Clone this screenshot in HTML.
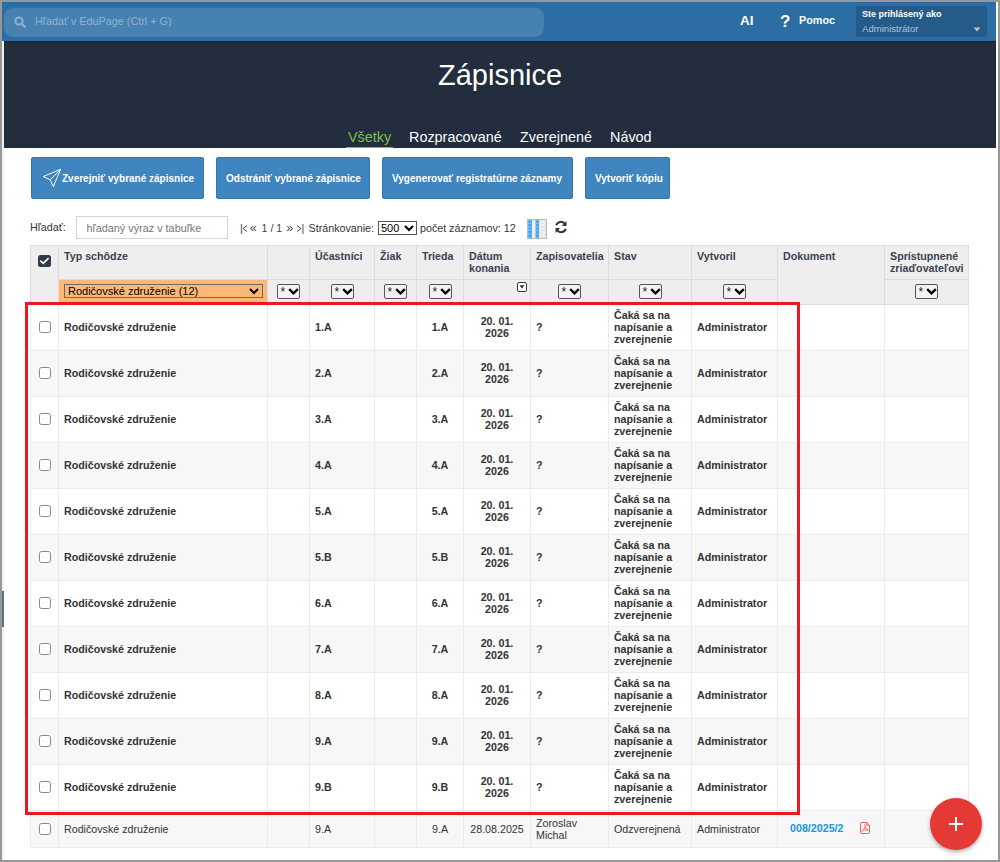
<!DOCTYPE html><html><head><meta charset="utf-8"><style>

*{box-sizing:border-box;margin:0;padding:0}
html,body{width:1000px;height:862px;overflow:hidden;background:#989898;font-family:"Liberation Sans", sans-serif;color:#333}
.abs{position:absolute}
.t{position:absolute;white-space:nowrap;line-height:1}
.b{font-weight:bold}
.btn{position:absolute;top:157px;height:42px;background:#3f85c0;border:1px solid #3677ae;border-radius:2px;color:#fff;font-weight:bold;font-size:10px}
.fs{position:absolute;width:23px;height:15px;border:1px solid #555;border-radius:2px;background:#f2f2f2}
.vl{position:absolute;width:1px}
.hl{position:absolute;height:1px}
.cb{position:absolute;width:12px;height:12px;border:1.5px solid #8a8a8a;border-radius:2.5px;background:#fff}

</style></head><body>
<div class="abs" style="left:2px;top:2px;width:996px;height:858px;background:#fff"></div>
<div class="abs" style="left:2px;top:41px;width:2px;height:818px;background:#f0f0f0"></div>
<div class="abs" style="left:2px;top:591px;width:2px;height:36px;background:#5a7486"></div>
<div class="abs" style="left:2px;top:2px;width:994px;height:39px;background:#2c6ea3"></div>
<div class="abs" style="left:4px;top:7px;width:540px;height:30px;background:#4681b2;border-radius:9px;box-shadow:inset 0 1px 1px rgba(0,0,0,0.12)"></div>
<svg class="abs" style="left:14px;top:16px" width="12" height="12" viewBox="0 0 12 12"><circle cx="5" cy="5" r="3.6" fill="none" stroke="#8fb3d2" stroke-width="2"/><line x1="7.6" y1="7.6" x2="10.8" y2="10.8" stroke="#8fb3d2" stroke-width="2.2" stroke-linecap="round"/></svg>
<div class="t" style="left:35px;top:16px;font-size:10.8px;color:#8fb3d2">Hľadať v EduPage (Ctrl + G)</div>
<div class="t b" style="left:740px;top:14px;font-size:13.5px;color:#fff">AI</div>
<div class="t b" style="left:780px;top:13px;font-size:17px;color:#fff">?</div>
<div class="t b" style="left:799px;top:15px;font-size:10.8px;color:#fff">Pomoc</div>
<div class="abs" style="left:856px;top:6px;width:131px;height:31px;background:#245b89;border-radius:3px"></div>
<div class="t b" style="left:862px;top:10px;font-size:9px;color:#fff">Ste prihlásený ako</div>
<div class="t" style="left:862px;top:24px;font-size:9.6px;color:#a6c3de">Administrátor</div>
<svg class="abs" style="left:973px;top:27px" width="8" height="5" viewBox="0 0 8 5"><path d="M0.5 0.5 L7.5 0.5 L4 4.5 Z" fill="#c9c3b8"/></svg>
<div class="abs" style="left:4px;top:41px;width:992px;height:107px;background:#222d3d;box-shadow:inset 0 1px 1px rgba(0,0,0,0.3)"></div>
<div class="t" style="left:438px;top:61px;font-size:29px;color:#fff">Zápisnice</div>
<div class="t" style="left:348px;top:130px;font-size:14.4px;color:#7cc144">Všetky</div>
<div class="abs" style="left:346px;top:147px;width:47px;height:1px;background:#7cc144"></div>
<div class="t" style="left:409px;top:130px;font-size:14.4px;color:#fff">Rozpracované</div>
<div class="t" style="left:520px;top:130px;font-size:14.4px;color:#fff">Zverejnené</div>
<div class="t" style="left:610px;top:130px;font-size:14.4px;color:#fff">Návod</div>
<div class="btn" style="left:31px;width:173px"><div class="t" style="left:30px;top:16px">Zverejniť vybrané zápisnice</div></div>
<svg class="abs" style="left:42px;top:168px" width="20" height="20" viewBox="0 0 20 20"><path d="M1.2 8.6 L18.6 1.3 L11.3 18.6 L8.2 11.8 Z M8.2 11.8 L18.6 1.3" fill="none" stroke="#fff" stroke-width="1" stroke-linejoin="round"/></svg>
<div class="btn" style="left:216px;width:154px"><div class="t" style="left:9px;top:16px">Odstrániť vybrané zápisnice</div></div>
<div class="btn" style="left:382px;width:191px"><div class="t" style="left:9px;top:16px">Vygenerovať registratúrne záznamy</div></div>
<div class="btn" style="left:585px;width:85px"><div class="t" style="left:9px;top:16px">Vytvoriť kópiu</div></div>
<div class="t" style="left:30px;top:222px;font-size:10.7px;color:#333">Hľadať:</div>
<div class="abs" style="left:76px;top:216px;width:152px;height:23px;border:1px solid #d4d4d4;background:#fff"></div>
<div class="t" style="left:86.5px;top:223px;font-size:10.85px;color:#767676">hľadaný výraz v tabuľke</div>
<div class="t" style="left:240px;top:223px;font-size:10.7px;color:#444">|</div>
<div class="t" style="left:249.8px;top:221.5px;font-size:12.5px;color:#444">«</div>
<div class="t" style="left:261.5px;top:223px;font-size:10.7px;color:#444">1 / 1</div>
<div class="t" style="left:286.3px;top:221.5px;font-size:12.5px;color:#444">»</div>
<div class="t" style="left:301.5px;top:223px;font-size:10.7px;color:#444">|</div>
<svg class="abs" style="left:242px;top:225px" width="6" height="7" viewBox="0 0 6 7"><path d="M5 0.5 L1 3.5 L5 6.5" fill="none" stroke="#444" stroke-width="1"/></svg>
<svg class="abs" style="left:296px;top:225px" width="6" height="7" viewBox="0 0 6 7"><path d="M1 0.5 L5 3.5 L1 6.5" fill="none" stroke="#444" stroke-width="1"/></svg>
<div class="t" style="left:308.6px;top:223px;font-size:10.7px;color:#333">Stránkovanie:</div>
<div class="abs" style="left:378px;top:221px;width:39px;height:14px;border:1px solid #555;background:#fff"></div>
<div class="t" style="left:381px;top:223px;font-size:11px;color:#000">500</div>
<svg class="abs" style="left:404px;top:225px" width="10" height="7" viewBox="0 0 10 7"><path d="M1 1 L5 5 L9 1" fill="none" stroke="#000" stroke-width="2"/></svg>
<div class="t" style="left:420px;top:223px;font-size:10.7px;color:#333">počet záznamov: 12</div>
<svg class="abs" style="left:527px;top:219px" width="20" height="20" viewBox="0 0 20 20"><rect x="0" y="0" width="20" height="20" fill="#b3bfc8"/><rect x="1.2" y="1.2" width="17.6" height="17.6" fill="#f1f1f1"/><rect x="1.2" y="1.2" width="3.8" height="17.6" fill="#4aa3f5"/><rect x="8.5" y="1.2" width="3.6" height="17.6" fill="#4aa3f5"/><path d="M5 4.5H8.5M12.1 4.5H18.8M5 8H8.5M12.1 8H18.8M5 11.2H8.5M12.1 11.2H18.8M5 15H8.5M12.1 15H18.8M15.3 1.2V18.8" stroke="#dfe4e8" stroke-width="0.8"/><path d="M1.2 4.5H5M8.5 4.5H12.1M1.2 8H5M8.5 8H12.1M1.2 11.2H5M8.5 11.2H12.1M1.2 15H5M8.5 15H12.1" stroke="#8cc4f7" stroke-width="0.8"/></svg>
<svg class="abs" style="left:554px;top:220px" width="14" height="14" viewBox="0 0 14 14"><path d="M2.2 5.2 A5 5 0 0 1 11 4" fill="none" stroke="#2b3340" stroke-width="2"/><path d="M12.5 1 L12.5 6 L7.8 6 Z" fill="#2b3340"/><path d="M11.8 8.8 A5 5 0 0 1 3 10" fill="none" stroke="#2b3340" stroke-width="2"/><path d="M1.5 13 L1.5 8 L6.2 8 Z" fill="#2b3340"/></svg>
<div class="abs" style="left:30px;top:245px;width:939px;height:60px;background:#eeeeee"></div>
<div class="abs" style="left:30px;top:304px;width:939px;height:47px;background:#ffffff"></div>
<div class="abs" style="left:30px;top:350px;width:939px;height:47px;background:#f7f7f7"></div>
<div class="abs" style="left:30px;top:396px;width:939px;height:47px;background:#ffffff"></div>
<div class="abs" style="left:30px;top:442px;width:939px;height:47px;background:#f7f7f7"></div>
<div class="abs" style="left:30px;top:488px;width:939px;height:47px;background:#ffffff"></div>
<div class="abs" style="left:30px;top:534px;width:939px;height:47px;background:#f7f7f7"></div>
<div class="abs" style="left:30px;top:580px;width:939px;height:47px;background:#ffffff"></div>
<div class="abs" style="left:30px;top:626px;width:939px;height:47px;background:#f7f7f7"></div>
<div class="abs" style="left:30px;top:672px;width:939px;height:47px;background:#ffffff"></div>
<div class="abs" style="left:30px;top:718px;width:939px;height:47px;background:#f7f7f7"></div>
<div class="abs" style="left:30px;top:764px;width:939px;height:47px;background:#ffffff"></div>
<div class="abs" style="left:30px;top:810px;width:939px;height:38px;background:#f7f7f7"></div>
<div class="abs" style="left:59px;top:280px;width:208px;height:24px;background:#fdb877"></div>
<div class="hl" style="left:30px;top:350px;width:939px;background:#ebebeb"></div>
<div class="hl" style="left:30px;top:396px;width:939px;background:#ebebeb"></div>
<div class="hl" style="left:30px;top:442px;width:939px;background:#ebebeb"></div>
<div class="hl" style="left:30px;top:488px;width:939px;background:#ebebeb"></div>
<div class="hl" style="left:30px;top:534px;width:939px;background:#ebebeb"></div>
<div class="hl" style="left:30px;top:580px;width:939px;background:#ebebeb"></div>
<div class="hl" style="left:30px;top:626px;width:939px;background:#ebebeb"></div>
<div class="hl" style="left:30px;top:672px;width:939px;background:#ebebeb"></div>
<div class="hl" style="left:30px;top:718px;width:939px;background:#ebebeb"></div>
<div class="hl" style="left:30px;top:764px;width:939px;background:#ebebeb"></div>
<div class="hl" style="left:30px;top:810px;width:939px;background:#ebebeb"></div>
<div class="hl" style="left:30px;top:847px;width:939px;background:#ebebeb"></div>
<div class="vl" style="left:30px;top:304px;height:544px;background:#ebebeb"></div>
<div class="vl" style="left:58px;top:304px;height:544px;background:#ebebeb"></div>
<div class="vl" style="left:267px;top:304px;height:544px;background:#ebebeb"></div>
<div class="vl" style="left:309px;top:304px;height:544px;background:#ebebeb"></div>
<div class="vl" style="left:374px;top:304px;height:544px;background:#ebebeb"></div>
<div class="vl" style="left:416px;top:304px;height:544px;background:#ebebeb"></div>
<div class="vl" style="left:463px;top:304px;height:544px;background:#ebebeb"></div>
<div class="vl" style="left:530px;top:304px;height:544px;background:#ebebeb"></div>
<div class="vl" style="left:608px;top:304px;height:544px;background:#ebebeb"></div>
<div class="vl" style="left:691px;top:304px;height:544px;background:#ebebeb"></div>
<div class="vl" style="left:777px;top:304px;height:544px;background:#ebebeb"></div>
<div class="vl" style="left:884px;top:304px;height:544px;background:#ebebeb"></div>
<div class="vl" style="left:968px;top:304px;height:544px;background:#ebebeb"></div>
<div class="hl" style="left:30px;top:245px;width:939px;background:#dcdcdc"></div>
<div class="hl" style="left:30px;top:304px;width:939px;background:#dcdcdc"></div>
<div class="hl" style="left:58px;top:279px;width:719px;background:#dcdcdc"></div>
<div class="hl" style="left:884px;top:279px;width:84px;background:#dcdcdc"></div>
<div class="vl" style="left:30px;top:245px;height:59px;background:#dcdcdc"></div>
<div class="vl" style="left:58px;top:245px;height:59px;background:#dcdcdc"></div>
<div class="vl" style="left:267px;top:245px;height:59px;background:#dcdcdc"></div>
<div class="vl" style="left:309px;top:245px;height:59px;background:#dcdcdc"></div>
<div class="vl" style="left:374px;top:245px;height:59px;background:#dcdcdc"></div>
<div class="vl" style="left:416px;top:245px;height:59px;background:#dcdcdc"></div>
<div class="vl" style="left:463px;top:245px;height:59px;background:#dcdcdc"></div>
<div class="vl" style="left:530px;top:245px;height:59px;background:#dcdcdc"></div>
<div class="vl" style="left:608px;top:245px;height:59px;background:#dcdcdc"></div>
<div class="vl" style="left:691px;top:245px;height:59px;background:#dcdcdc"></div>
<div class="vl" style="left:777px;top:245px;height:59px;background:#dcdcdc"></div>
<div class="vl" style="left:884px;top:245px;height:59px;background:#dcdcdc"></div>
<div class="vl" style="left:968px;top:245px;height:59px;background:#dcdcdc"></div>
<div class="t b" style="left:64px;top:251px;font-size:10.7px;color:#3b4250">Typ schôdze</div>
<div class="t b" style="left:315px;top:251px;font-size:10.7px;color:#3b4250">Účastníci</div>
<div class="t b" style="left:380px;top:251px;font-size:10.7px;color:#3b4250">Žiak</div>
<div class="t b" style="left:422px;top:251px;font-size:10.7px;color:#3b4250">Trieda</div>
<div class="t b" style="left:469px;top:251px;font-size:10.7px;color:#3b4250">Dátum</div>
<div class="t b" style="left:469px;top:263px;font-size:10.7px;color:#3b4250">konania</div>
<div class="t b" style="left:536px;top:251px;font-size:10.7px;color:#3b4250">Zapisovatelia</div>
<div class="t b" style="left:614px;top:251px;font-size:10.7px;color:#3b4250">Stav</div>
<div class="t b" style="left:697px;top:251px;font-size:10.7px;color:#3b4250">Vytvoril</div>
<div class="t b" style="left:783px;top:251px;font-size:10.7px;color:#3b4250">Dokument</div>
<div class="t b" style="left:890px;top:251px;font-size:10.7px;color:#3b4250">Sprístupnené</div>
<div class="t b" style="left:890px;top:263px;font-size:10.7px;color:#3b4250">zriaďovateľovi</div>
<div class="abs" style="left:38px;top:255px;width:13px;height:12px;background:#343a44;border-radius:2.5px"></div>
<svg class="abs" style="left:38px;top:255px" width="13" height="12" viewBox="0 0 13 12"><path d="M2.3 5.6 L5.2 8.3 L10.6 3.2" fill="none" stroke="#fff" stroke-width="1.6"/></svg>
<div class="fs" style="left:277px;top:284px"></div>
<div class="t" style="left:280.5px;top:286px;font-size:12px;color:#222">*</div>
<svg class="abs" style="left:288px;top:288px" width="11" height="7" viewBox="0 0 11 7"><path d="M1.2 1.2 L5.5 5.3 L9.8 1.2" fill="none" stroke="#000" stroke-width="2.3"/></svg>
<div class="fs" style="left:331px;top:284px"></div>
<div class="t" style="left:334.5px;top:286px;font-size:12px;color:#222">*</div>
<svg class="abs" style="left:342px;top:288px" width="11" height="7" viewBox="0 0 11 7"><path d="M1.2 1.2 L5.5 5.3 L9.8 1.2" fill="none" stroke="#000" stroke-width="2.3"/></svg>
<div class="fs" style="left:384px;top:284px"></div>
<div class="t" style="left:387.5px;top:286px;font-size:12px;color:#222">*</div>
<svg class="abs" style="left:395px;top:288px" width="11" height="7" viewBox="0 0 11 7"><path d="M1.2 1.2 L5.5 5.3 L9.8 1.2" fill="none" stroke="#000" stroke-width="2.3"/></svg>
<div class="fs" style="left:429px;top:284px"></div>
<div class="t" style="left:432.5px;top:286px;font-size:12px;color:#222">*</div>
<svg class="abs" style="left:440px;top:288px" width="11" height="7" viewBox="0 0 11 7"><path d="M1.2 1.2 L5.5 5.3 L9.8 1.2" fill="none" stroke="#000" stroke-width="2.3"/></svg>
<div class="fs" style="left:558px;top:284px"></div>
<div class="t" style="left:561.5px;top:286px;font-size:12px;color:#222">*</div>
<svg class="abs" style="left:569px;top:288px" width="11" height="7" viewBox="0 0 11 7"><path d="M1.2 1.2 L5.5 5.3 L9.8 1.2" fill="none" stroke="#000" stroke-width="2.3"/></svg>
<div class="fs" style="left:639px;top:284px"></div>
<div class="t" style="left:642.5px;top:286px;font-size:12px;color:#222">*</div>
<svg class="abs" style="left:650px;top:288px" width="11" height="7" viewBox="0 0 11 7"><path d="M1.2 1.2 L5.5 5.3 L9.8 1.2" fill="none" stroke="#000" stroke-width="2.3"/></svg>
<div class="fs" style="left:723px;top:284px"></div>
<div class="t" style="left:726.5px;top:286px;font-size:12px;color:#222">*</div>
<svg class="abs" style="left:734px;top:288px" width="11" height="7" viewBox="0 0 11 7"><path d="M1.2 1.2 L5.5 5.3 L9.8 1.2" fill="none" stroke="#000" stroke-width="2.3"/></svg>
<div class="fs" style="left:915px;top:284px"></div>
<div class="t" style="left:918.5px;top:286px;font-size:12px;color:#222">*</div>
<svg class="abs" style="left:926px;top:288px" width="11" height="7" viewBox="0 0 11 7"><path d="M1.2 1.2 L5.5 5.3 L9.8 1.2" fill="none" stroke="#000" stroke-width="2.3"/></svg>
<div class="abs" style="left:517px;top:282px;width:10px;height:10px;border:1px solid #3a3a3a;border-radius:2px;background:#fff"></div>
<svg class="abs" style="left:517px;top:282px" width="10" height="10" viewBox="0 0 10 10"><path d="M2.6 3.2 L7.4 3.2 L5 6.8 Z" fill="#2a2f3a"/></svg>
<div class="abs" style="left:64px;top:284px;width:199px;height:14px;border:1px solid #6b6b6b"></div>
<div class="t" style="left:68px;top:286px;font-size:11px;color:#000">Rodičovské združenie (12)</div>
<svg class="abs" style="left:249px;top:288px" width="10" height="7" viewBox="0 0 10 7"><path d="M1 1 L5 5 L9 1" fill="none" stroke="#000" stroke-width="2"/></svg>
<div class="cb" style="left:39px;top:321px"></div>
<div class="t b" style="left:64px;top:322px;font-size:10.7px;color:#333">Rodičovské združenie</div>
<div class="t b" style="left:315px;top:322px;font-size:10.7px;color:#333">1.A</div>
<div class="t b" style="left:417px;top:322px;width:46px;text-align:center;font-size:10.7px;color:#333">1.A</div>
<div class="t b" style="left:464px;top:316px;width:66px;text-align:center;font-size:10.7px;color:#333">20. 01.</div>
<div class="t b" style="left:464px;top:328px;width:66px;text-align:center;font-size:10.7px;color:#333">2026</div>
<div class="t b" style="left:536px;top:322px;font-size:10.7px;color:#333">?</div>
<div class="t b" style="left:614px;top:310px;font-size:10.7px;color:#333">Čaká sa na</div>
<div class="t b" style="left:614px;top:322px;font-size:10.7px;color:#333">napísanie a</div>
<div class="t b" style="left:614px;top:334px;font-size:10.7px;color:#333">zverejnenie</div>
<div class="t b" style="left:697px;top:322px;font-size:10.7px;color:#333">Administrator</div>
<div class="cb" style="left:39px;top:367px"></div>
<div class="t b" style="left:64px;top:368px;font-size:10.7px;color:#333">Rodičovské združenie</div>
<div class="t b" style="left:315px;top:368px;font-size:10.7px;color:#333">2.A</div>
<div class="t b" style="left:417px;top:368px;width:46px;text-align:center;font-size:10.7px;color:#333">2.A</div>
<div class="t b" style="left:464px;top:362px;width:66px;text-align:center;font-size:10.7px;color:#333">20. 01.</div>
<div class="t b" style="left:464px;top:374px;width:66px;text-align:center;font-size:10.7px;color:#333">2026</div>
<div class="t b" style="left:536px;top:368px;font-size:10.7px;color:#333">?</div>
<div class="t b" style="left:614px;top:356px;font-size:10.7px;color:#333">Čaká sa na</div>
<div class="t b" style="left:614px;top:368px;font-size:10.7px;color:#333">napísanie a</div>
<div class="t b" style="left:614px;top:380px;font-size:10.7px;color:#333">zverejnenie</div>
<div class="t b" style="left:697px;top:368px;font-size:10.7px;color:#333">Administrator</div>
<div class="cb" style="left:39px;top:413px"></div>
<div class="t b" style="left:64px;top:414px;font-size:10.7px;color:#333">Rodičovské združenie</div>
<div class="t b" style="left:315px;top:414px;font-size:10.7px;color:#333">3.A</div>
<div class="t b" style="left:417px;top:414px;width:46px;text-align:center;font-size:10.7px;color:#333">3.A</div>
<div class="t b" style="left:464px;top:408px;width:66px;text-align:center;font-size:10.7px;color:#333">20. 01.</div>
<div class="t b" style="left:464px;top:420px;width:66px;text-align:center;font-size:10.7px;color:#333">2026</div>
<div class="t b" style="left:536px;top:414px;font-size:10.7px;color:#333">?</div>
<div class="t b" style="left:614px;top:402px;font-size:10.7px;color:#333">Čaká sa na</div>
<div class="t b" style="left:614px;top:414px;font-size:10.7px;color:#333">napísanie a</div>
<div class="t b" style="left:614px;top:426px;font-size:10.7px;color:#333">zverejnenie</div>
<div class="t b" style="left:697px;top:414px;font-size:10.7px;color:#333">Administrator</div>
<div class="cb" style="left:39px;top:459px"></div>
<div class="t b" style="left:64px;top:460px;font-size:10.7px;color:#333">Rodičovské združenie</div>
<div class="t b" style="left:315px;top:460px;font-size:10.7px;color:#333">4.A</div>
<div class="t b" style="left:417px;top:460px;width:46px;text-align:center;font-size:10.7px;color:#333">4.A</div>
<div class="t b" style="left:464px;top:454px;width:66px;text-align:center;font-size:10.7px;color:#333">20. 01.</div>
<div class="t b" style="left:464px;top:466px;width:66px;text-align:center;font-size:10.7px;color:#333">2026</div>
<div class="t b" style="left:536px;top:460px;font-size:10.7px;color:#333">?</div>
<div class="t b" style="left:614px;top:448px;font-size:10.7px;color:#333">Čaká sa na</div>
<div class="t b" style="left:614px;top:460px;font-size:10.7px;color:#333">napísanie a</div>
<div class="t b" style="left:614px;top:472px;font-size:10.7px;color:#333">zverejnenie</div>
<div class="t b" style="left:697px;top:460px;font-size:10.7px;color:#333">Administrator</div>
<div class="cb" style="left:39px;top:505px"></div>
<div class="t b" style="left:64px;top:506px;font-size:10.7px;color:#333">Rodičovské združenie</div>
<div class="t b" style="left:315px;top:506px;font-size:10.7px;color:#333">5.A</div>
<div class="t b" style="left:417px;top:506px;width:46px;text-align:center;font-size:10.7px;color:#333">5.A</div>
<div class="t b" style="left:464px;top:500px;width:66px;text-align:center;font-size:10.7px;color:#333">20. 01.</div>
<div class="t b" style="left:464px;top:512px;width:66px;text-align:center;font-size:10.7px;color:#333">2026</div>
<div class="t b" style="left:536px;top:506px;font-size:10.7px;color:#333">?</div>
<div class="t b" style="left:614px;top:494px;font-size:10.7px;color:#333">Čaká sa na</div>
<div class="t b" style="left:614px;top:506px;font-size:10.7px;color:#333">napísanie a</div>
<div class="t b" style="left:614px;top:518px;font-size:10.7px;color:#333">zverejnenie</div>
<div class="t b" style="left:697px;top:506px;font-size:10.7px;color:#333">Administrator</div>
<div class="cb" style="left:39px;top:551px"></div>
<div class="t b" style="left:64px;top:552px;font-size:10.7px;color:#333">Rodičovské združenie</div>
<div class="t b" style="left:315px;top:552px;font-size:10.7px;color:#333">5.B</div>
<div class="t b" style="left:417px;top:552px;width:46px;text-align:center;font-size:10.7px;color:#333">5.B</div>
<div class="t b" style="left:464px;top:546px;width:66px;text-align:center;font-size:10.7px;color:#333">20. 01.</div>
<div class="t b" style="left:464px;top:558px;width:66px;text-align:center;font-size:10.7px;color:#333">2026</div>
<div class="t b" style="left:536px;top:552px;font-size:10.7px;color:#333">?</div>
<div class="t b" style="left:614px;top:540px;font-size:10.7px;color:#333">Čaká sa na</div>
<div class="t b" style="left:614px;top:552px;font-size:10.7px;color:#333">napísanie a</div>
<div class="t b" style="left:614px;top:564px;font-size:10.7px;color:#333">zverejnenie</div>
<div class="t b" style="left:697px;top:552px;font-size:10.7px;color:#333">Administrator</div>
<div class="cb" style="left:39px;top:597px"></div>
<div class="t b" style="left:64px;top:598px;font-size:10.7px;color:#333">Rodičovské združenie</div>
<div class="t b" style="left:315px;top:598px;font-size:10.7px;color:#333">6.A</div>
<div class="t b" style="left:417px;top:598px;width:46px;text-align:center;font-size:10.7px;color:#333">6.A</div>
<div class="t b" style="left:464px;top:592px;width:66px;text-align:center;font-size:10.7px;color:#333">20. 01.</div>
<div class="t b" style="left:464px;top:604px;width:66px;text-align:center;font-size:10.7px;color:#333">2026</div>
<div class="t b" style="left:536px;top:598px;font-size:10.7px;color:#333">?</div>
<div class="t b" style="left:614px;top:586px;font-size:10.7px;color:#333">Čaká sa na</div>
<div class="t b" style="left:614px;top:598px;font-size:10.7px;color:#333">napísanie a</div>
<div class="t b" style="left:614px;top:610px;font-size:10.7px;color:#333">zverejnenie</div>
<div class="t b" style="left:697px;top:598px;font-size:10.7px;color:#333">Administrator</div>
<div class="cb" style="left:39px;top:643px"></div>
<div class="t b" style="left:64px;top:644px;font-size:10.7px;color:#333">Rodičovské združenie</div>
<div class="t b" style="left:315px;top:644px;font-size:10.7px;color:#333">7.A</div>
<div class="t b" style="left:417px;top:644px;width:46px;text-align:center;font-size:10.7px;color:#333">7.A</div>
<div class="t b" style="left:464px;top:638px;width:66px;text-align:center;font-size:10.7px;color:#333">20. 01.</div>
<div class="t b" style="left:464px;top:650px;width:66px;text-align:center;font-size:10.7px;color:#333">2026</div>
<div class="t b" style="left:536px;top:644px;font-size:10.7px;color:#333">?</div>
<div class="t b" style="left:614px;top:632px;font-size:10.7px;color:#333">Čaká sa na</div>
<div class="t b" style="left:614px;top:644px;font-size:10.7px;color:#333">napísanie a</div>
<div class="t b" style="left:614px;top:656px;font-size:10.7px;color:#333">zverejnenie</div>
<div class="t b" style="left:697px;top:644px;font-size:10.7px;color:#333">Administrator</div>
<div class="cb" style="left:39px;top:689px"></div>
<div class="t b" style="left:64px;top:690px;font-size:10.7px;color:#333">Rodičovské združenie</div>
<div class="t b" style="left:315px;top:690px;font-size:10.7px;color:#333">8.A</div>
<div class="t b" style="left:417px;top:690px;width:46px;text-align:center;font-size:10.7px;color:#333">8.A</div>
<div class="t b" style="left:464px;top:684px;width:66px;text-align:center;font-size:10.7px;color:#333">20. 01.</div>
<div class="t b" style="left:464px;top:696px;width:66px;text-align:center;font-size:10.7px;color:#333">2026</div>
<div class="t b" style="left:536px;top:690px;font-size:10.7px;color:#333">?</div>
<div class="t b" style="left:614px;top:678px;font-size:10.7px;color:#333">Čaká sa na</div>
<div class="t b" style="left:614px;top:690px;font-size:10.7px;color:#333">napísanie a</div>
<div class="t b" style="left:614px;top:702px;font-size:10.7px;color:#333">zverejnenie</div>
<div class="t b" style="left:697px;top:690px;font-size:10.7px;color:#333">Administrator</div>
<div class="cb" style="left:39px;top:735px"></div>
<div class="t b" style="left:64px;top:736px;font-size:10.7px;color:#333">Rodičovské združenie</div>
<div class="t b" style="left:315px;top:736px;font-size:10.7px;color:#333">9.A</div>
<div class="t b" style="left:417px;top:736px;width:46px;text-align:center;font-size:10.7px;color:#333">9.A</div>
<div class="t b" style="left:464px;top:730px;width:66px;text-align:center;font-size:10.7px;color:#333">20. 01.</div>
<div class="t b" style="left:464px;top:742px;width:66px;text-align:center;font-size:10.7px;color:#333">2026</div>
<div class="t b" style="left:536px;top:736px;font-size:10.7px;color:#333">?</div>
<div class="t b" style="left:614px;top:724px;font-size:10.7px;color:#333">Čaká sa na</div>
<div class="t b" style="left:614px;top:736px;font-size:10.7px;color:#333">napísanie a</div>
<div class="t b" style="left:614px;top:748px;font-size:10.7px;color:#333">zverejnenie</div>
<div class="t b" style="left:697px;top:736px;font-size:10.7px;color:#333">Administrator</div>
<div class="cb" style="left:39px;top:781px"></div>
<div class="t b" style="left:64px;top:782px;font-size:10.7px;color:#333">Rodičovské združenie</div>
<div class="t b" style="left:315px;top:782px;font-size:10.7px;color:#333">9.B</div>
<div class="t b" style="left:417px;top:782px;width:46px;text-align:center;font-size:10.7px;color:#333">9.B</div>
<div class="t b" style="left:464px;top:776px;width:66px;text-align:center;font-size:10.7px;color:#333">20. 01.</div>
<div class="t b" style="left:464px;top:788px;width:66px;text-align:center;font-size:10.7px;color:#333">2026</div>
<div class="t b" style="left:536px;top:782px;font-size:10.7px;color:#333">?</div>
<div class="t b" style="left:614px;top:770px;font-size:10.7px;color:#333">Čaká sa na</div>
<div class="t b" style="left:614px;top:782px;font-size:10.7px;color:#333">napísanie a</div>
<div class="t b" style="left:614px;top:794px;font-size:10.7px;color:#333">zverejnenie</div>
<div class="t b" style="left:697px;top:782px;font-size:10.7px;color:#333">Administrator</div>
<div class="cb" style="left:39px;top:823px"></div>
<div class="t" style="left:64px;top:824px;font-size:10.7px;color:#333">Rodičovské združenie</div>
<div class="t" style="left:315px;top:824px;font-size:10.7px;color:#333">9.A</div>
<div class="t" style="left:417px;top:824px;width:46px;text-align:center;font-size:10.7px;color:#333">9.A</div>
<div class="t" style="left:464px;top:824px;width:66px;text-align:center;font-size:10.7px;color:#333">28.08.2025</div>
<div class="t" style="left:536px;top:818px;font-size:10.7px;color:#333">Zoroslav</div>
<div class="t" style="left:536px;top:830px;font-size:10.7px;color:#333">Michal</div>
<div class="t" style="left:614px;top:824px;font-size:10.7px;color:#333">Odzverejnená</div>
<div class="t" style="left:697px;top:824px;font-size:10.7px;color:#333">Administrator</div>
<div class="t b" style="left:790px;top:823px;font-size:10.7px;color:#2095dd">008/2025/2</div>
<svg class="abs" style="left:860px;top:822px" width="11" height="12" viewBox="0 0 11 12"><path d="M1.8 0.5 H6.8 L9.5 3.2 V10.3 Q9.5 11.5 8.3 11.5 H1.8 Q0.6 11.5 0.6 10.3 V1.7 Q0.6 0.5 1.8 0.5 Z M6.8 0.5 V3.2 H9.5" fill="none" stroke="#ef5b50" stroke-width="1"/><path d="M4.8 2.2 L5.2 5 L8 8.3 M5.2 5 L2.2 9.8 M3.6 7.6 L8 8.3" fill="none" stroke="#ef5b50" stroke-width="0.9"/></svg>
<div class="abs" style="left:25px;top:302px;width:775px;height:513px;border:3px solid #ea1822"></div>
<div class="abs" style="left:930px;top:798px;width:52px;height:52px;border-radius:50%;background:#e53935;box-shadow:0 2px 4px rgba(0,0,0,0.3)"></div>
<div class="abs" style="left:949px;top:823px;width:14px;height:2px;background:#fff"></div>
<div class="abs" style="left:955px;top:817px;width:2px;height:14px;background:#fff"></div>
</body></html>
